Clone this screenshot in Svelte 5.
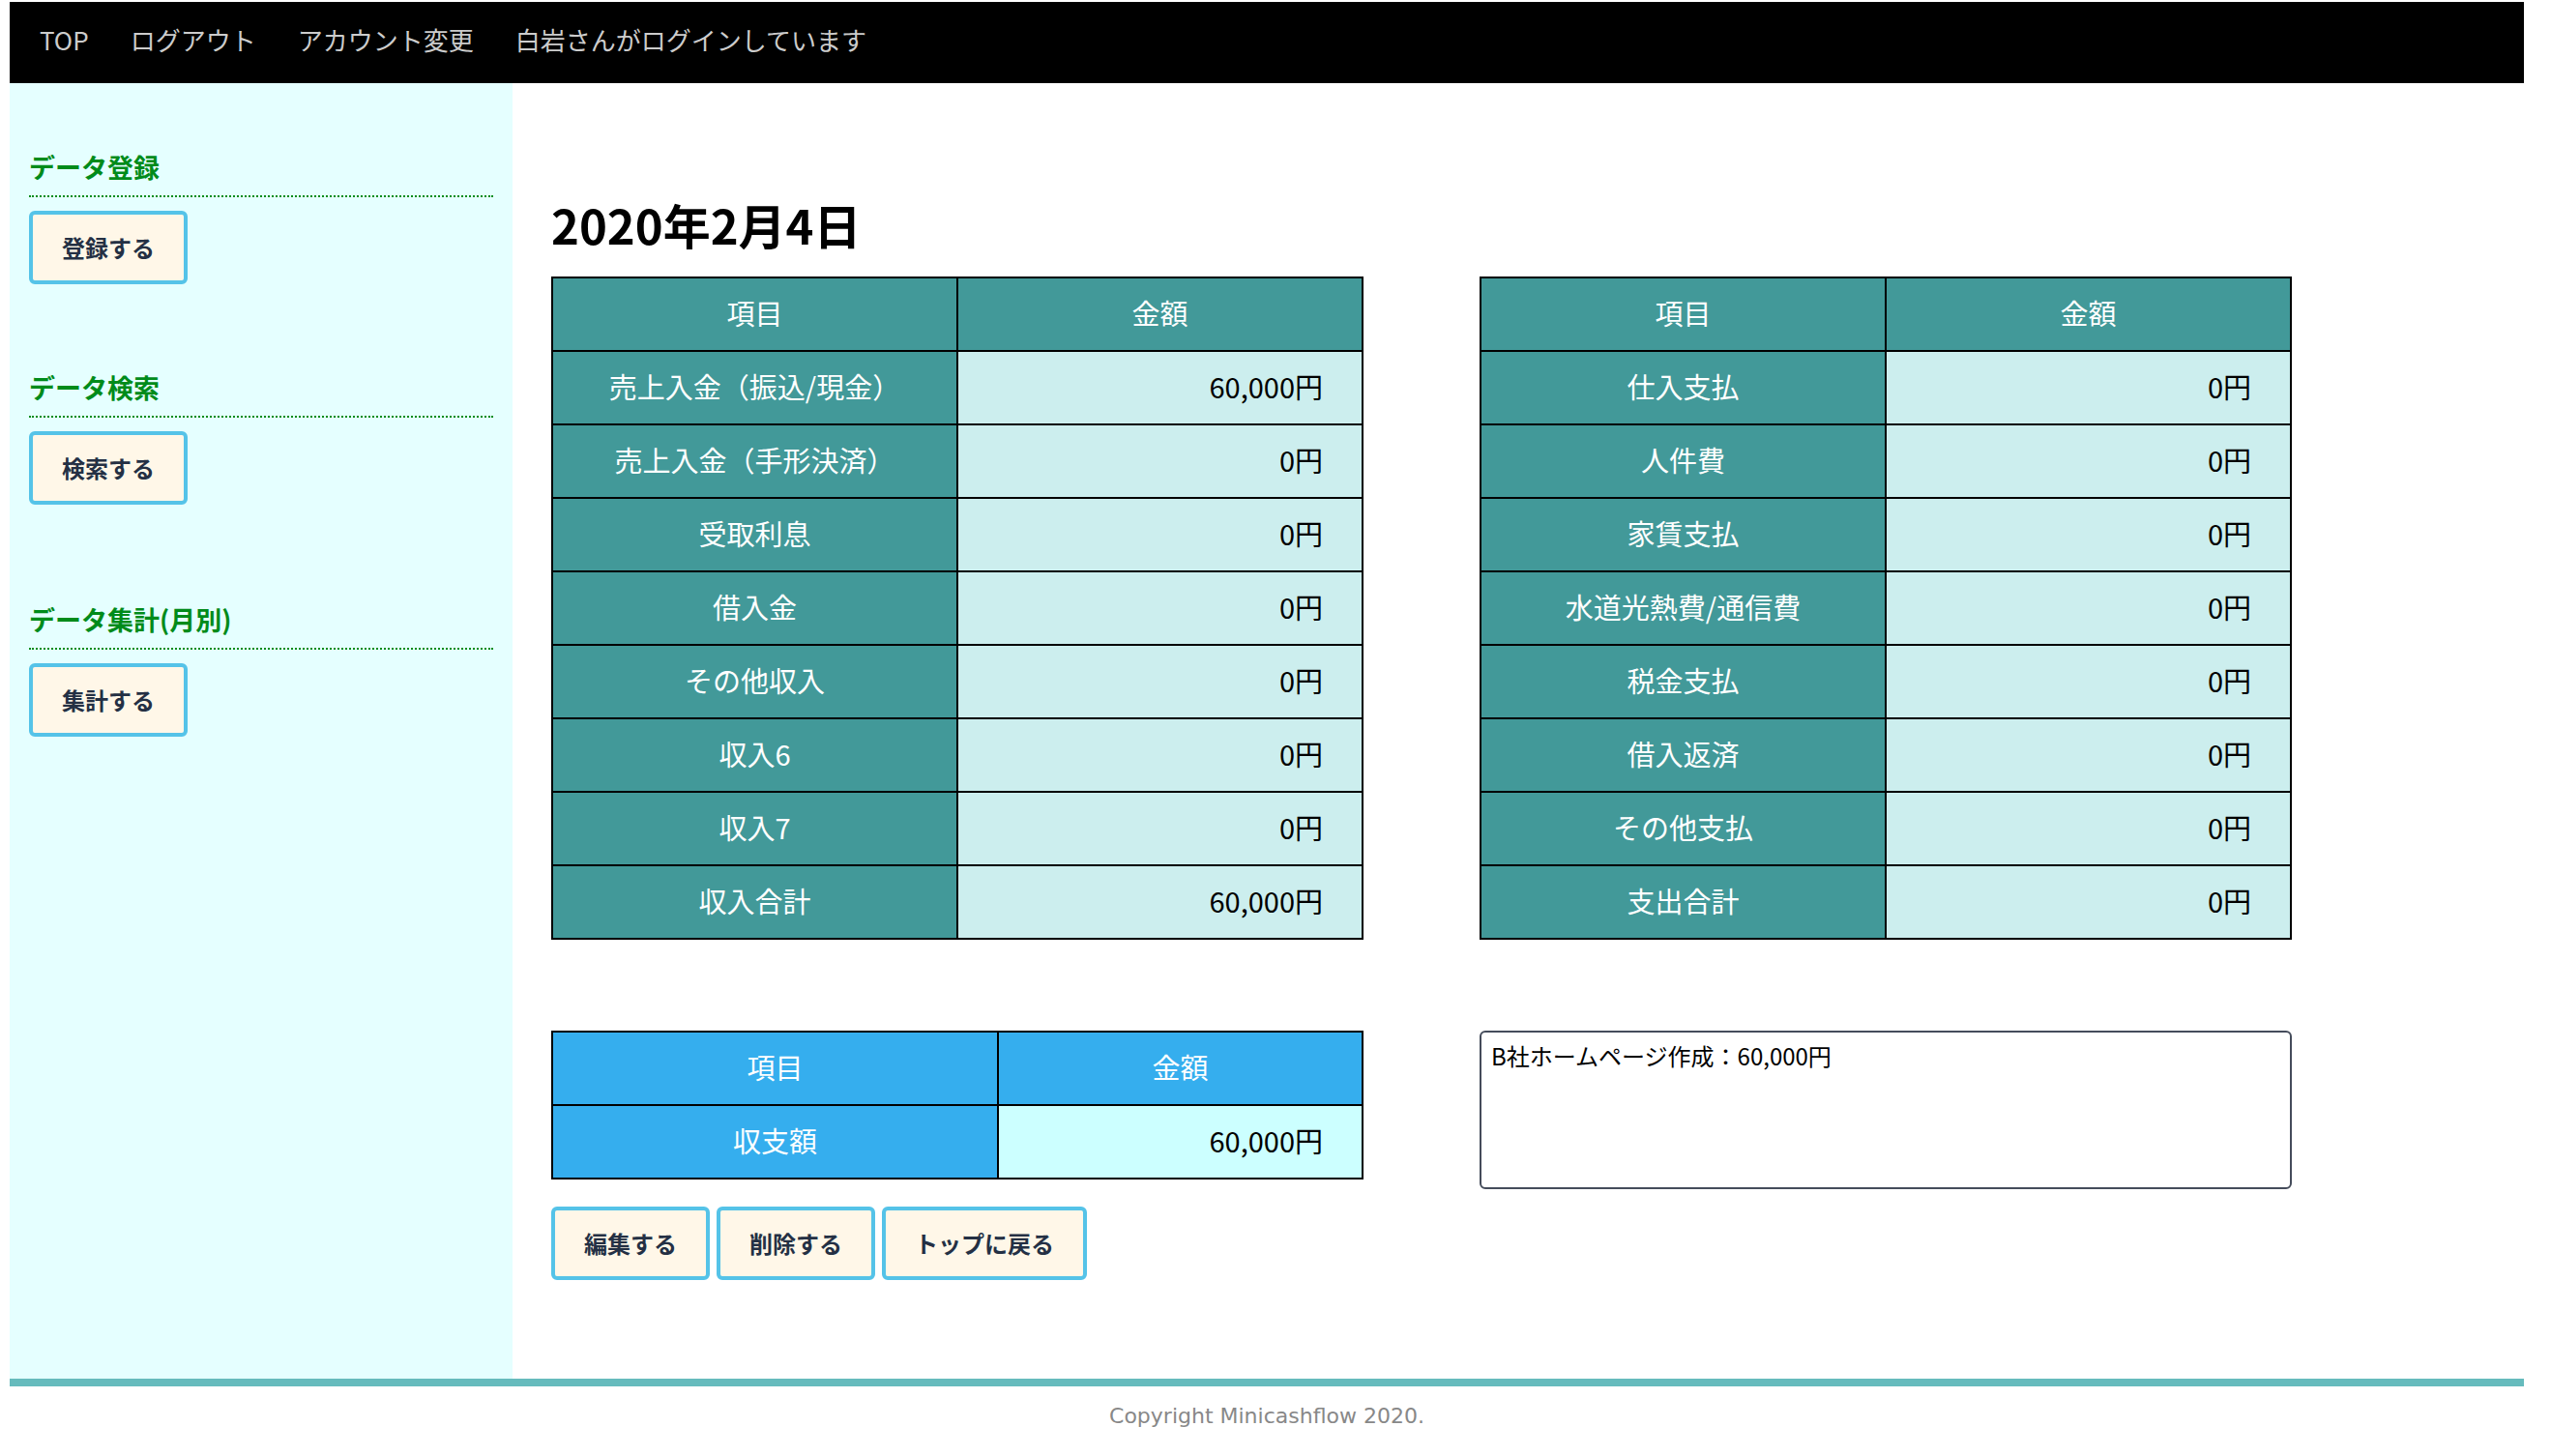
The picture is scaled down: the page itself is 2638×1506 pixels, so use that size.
<script>
  const income = [
    ['売上入金（振込/現金）', '60,000円'],
    ['売上入金（手形決済）', '0円'],
    ['受取利息', '0円'],
    ['借入金', '0円'],
    ['その他収入', '0円'],
    ['収入6', '0円'],
    ['収入7', '0円'],
    ['収入合計', '60,000円']
  ];
  const expense = [
    ['仕入支払', '0円'],
    ['人件費', '0円'],
    ['家賃支払', '0円'],
    ['水道光熱費/通信費', '0円'],
    ['税金支払', '0円'],
    ['借入返済', '0円'],
    ['その他支払', '0円'],
    ['支出合計', '0円']
  ];
  const balance = [['収支額', '60,000円']];
  const actions = ['編集する', '削除する', 'トップに戻る'];
  let memo = $state('B社ホームページ作成：60,000円');
</script>

{#snippet ledger(rows, kind)}
  <table class={kind}>
    <thead>
      <tr><th scope="col" class="item">項目</th><th scope="col">金額</th></tr>
    </thead>
    <tbody>
      {#each rows as [name, amount]}
        <tr><th scope="row">{name}</th><td>{amount}</td></tr>
      {/each}
    </tbody>
  </table>
{/snippet}

<div class="page">
  <nav>
    <a href="#top">TOP</a>
    <a href="#logout">ログアウト</a>
    <a href="#account">アカウント変更</a>
    <span>白岩さんがログインしています</span>
  </nav>

  <div class="body">
    <aside>
      <section>
        <h2>データ登録</h2>
        <button type="button">登録する</button>
      </section>
      <section>
        <h2>データ検索</h2>
        <button type="button">検索する</button>
      </section>
      <section class="monthly">
        <h2>データ集計(月別)</h2>
        <button type="button">集計する</button>
      </section>
    </aside>

    <main>
      <h1>2020年2月4日</h1>
      <div class="grid">
        {@render ledger(income, 'flow')}
        {@render ledger(expense, 'flow')}
        <div>
          {@render ledger(balance, 'balance')}
          <div class="actions">
            {#each actions as label}
              <button type="button">{label}</button>
            {/each}
          </div>
        </div>
        <textarea aria-label="メモ" bind:value={memo}></textarea>
      </div>
    </main>
  </div>

  <footer>Copyright Minicashflow 2020.</footer>
</div>

<style>
  :global(body) {
    background: #fff;
  }
  .page {
    margin: 2px 28px 0 10px;
    font-family: 'Noto Sans CJK JP', sans-serif;
    font-size: 24px;
    color: #000;
  }
  .page :global(*) {
    box-sizing: border-box;
  }
  nav {
    display: flex;
    align-items: center;
    gap: 43px;
    min-height: 84px;
    padding: 0 31px 6px;
    background: #000;
    color: #ccc;
    font-size: 26px;
    line-height: 40px;
  }
  nav a {
    color: inherit;
    text-decoration: none;
  }
  .body {
    display: flex;
  }
  aside {
    flex: 0 0 20%;
    padding: 66px 20px;
    background: #e5ffff;
  }
  section {
    margin-bottom: 86px;
  }
  .monthly {
    margin-top: 98px;
  }
  h2 {
    margin: 0 0 14px;
    padding-bottom: 8px;
    border-bottom: 2px dotted #008b1a;
    color: #008b1a;
    font-size: 27px;
    line-height: 42px;
    font-weight: 700;
  }
  button {
    display: block;
    min-height: 76px;
    padding: 0 30px;
    border: 4px solid #55c3e8;
    border-radius: 6px;
    background: #fff7e8;
    color: #243044;
    font: 700 24px/36px 'Noto Sans CJK JP', sans-serif;
    cursor: pointer;
  }
  main {
    flex: 1;
    min-width: 0;
    padding: 110px 40px 102px;
  }
  h1 {
    margin: 0 0 18px;
    font-size: 49px;
    line-height: 72px;
    font-weight: 700;
  }
  .grid {
    display: grid;
    grid-template-columns: 42% 42%;
    column-gap: 6%;
    row-gap: 94px;
    align-items: start;
  }
  table {
    width: 100%;
    table-layout: fixed;
    border-collapse: collapse;
    font-size: 29px;
    line-height: 44px;
  }
  th,
  td {
    height: 76px;
    padding: 0 8px 4px;
    border: 2px solid #000;
  }
  th {
    color: #fff;
    font-weight: 400;
    text-align: center;
  }
  td {
    padding-right: 40px;
    text-align: right;
  }
  .flow th {
    background: #429999;
  }
  .flow td {
    background: #cceeee;
  }
  .balance th {
    background: #35aeee;
  }
  .balance td {
    background: #ccffff;
  }
  .balance .item {
    width: 55%;
  }
  .actions {
    display: flex;
    flex-wrap: wrap;
    gap: 7px;
    margin-top: 28px;
  }
  textarea {
    display: block;
    width: 100%;
    height: 164px;
    padding: 6px 10px;
    border: 2px solid #454c5b;
    border-radius: 6px;
    background: #fff;
    color: #000;
    font: 400 24px/36px 'Noto Sans CJK JP', sans-serif;
    resize: none;
  }
  footer {
    padding: 14px 0;
    border-top: 8px solid #66bbbd;
    color: #888;
    font: 22px/34px 'DejaVu Sans', Verdana, sans-serif;
    text-align: center;
  }
</style>
